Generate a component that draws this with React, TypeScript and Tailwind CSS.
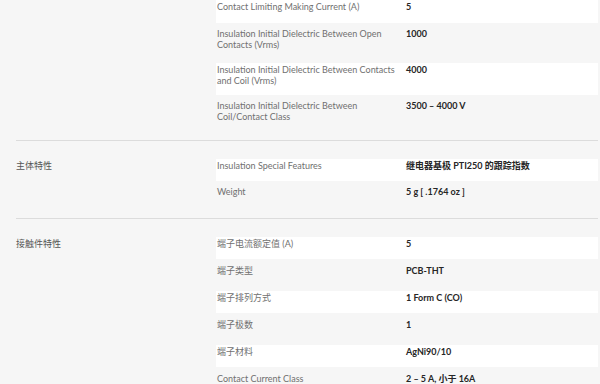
const FONT = "font-['Lato','Noto_Sans_CJK_SC',sans-serif]";

type Row = { label: string; value: string };
type Section = { title: string; rows: Row[]; pad: string; gap: string };

const sections: Section[] = [
  {
    title: "",
    pad: "pb-[5px]",
    gap: "pb-[4px]",
    rows: [
      { label: "Contact Limiting Making Current (A)", value: "5" },
      { label: "Insulation Initial Dielectric Between Open Contacts (Vrms)", value: "1000" },
      { label: "Insulation Initial Dielectric Between Contacts and Coil (Vrms)", value: "4000" },
      { label: "Insulation Initial Dielectric Between Coil/Contact Class", value: "3500 – 4000 V" },
    ],
  },
  {
    title: "主体特性",
    pad: "pb-[6px]",
    gap: "pb-[4px]",
    rows: [
      { label: "Insulation Special Features", value: "继电器基极 PTI250 的跟踪指数" },
      { label: "Weight", value: "5 g [ .1764 oz ]" },
    ],
  },
  {
    title: "接触件特性",
    pad: "pb-[5px]",
    gap: "pb-[4.6px]",
    rows: [
      { label: "端子电流额定值 (A)", value: "5" },
      { label: "端子类型", value: "PCB-THT" },
      { label: "端子排列方式", value: "1 Form C (CO)" },
      { label: "端子极数", value: "1" },
      { label: "端子材料", value: "AgNi90/10" },
      { label: "Contact Current Class", value: "2 – 5 A, 小于 16A" },
    ],
  },
];

function SpecRow({ row, striped, gap }: { row: Row; striped: boolean; gap: string }) {
  return (
    <div className={gap}>
      <div
        className={`flex min-h-[22.5px] pt-[1px] pb-[8px] leading-[11.5px] ${striped ? "bg-white" : ""}`}
      >
        <div className="w-[190px] shrink-0 pl-[1px] pr-[4px] text-[9px] text-[#707070]">{row.label}</div>
        <div className="flex-1 text-[9px] font-bold text-[#262626]">{row.value}</div>
      </div>
    </div>
  );
}

export default function App() {
  return (
    <div className={`h-[384px] w-[600px] overflow-hidden bg-[#f6f6f6] ${FONT}`}>
      <div className="w-[598px] pl-[16px]">
        {sections.map((s, i) => (
          <div key={i} className={`flex ${s.pad} ${i > 0 ? "border-t border-[#dcdcdc] pt-[18px]" : ""}`}>
            <div className="w-[200px] shrink-0 pt-[1px] text-[9px] leading-[11.5px] text-[#555]">{s.title}</div>
            <div className="flex-1">
              {s.rows.map((r, j) => (
                <SpecRow key={j} row={r} striped={j % 2 === 0} gap={s.gap} />
              ))}
            </div>
          </div>
        ))}
      </div>
    </div>
  );
}
